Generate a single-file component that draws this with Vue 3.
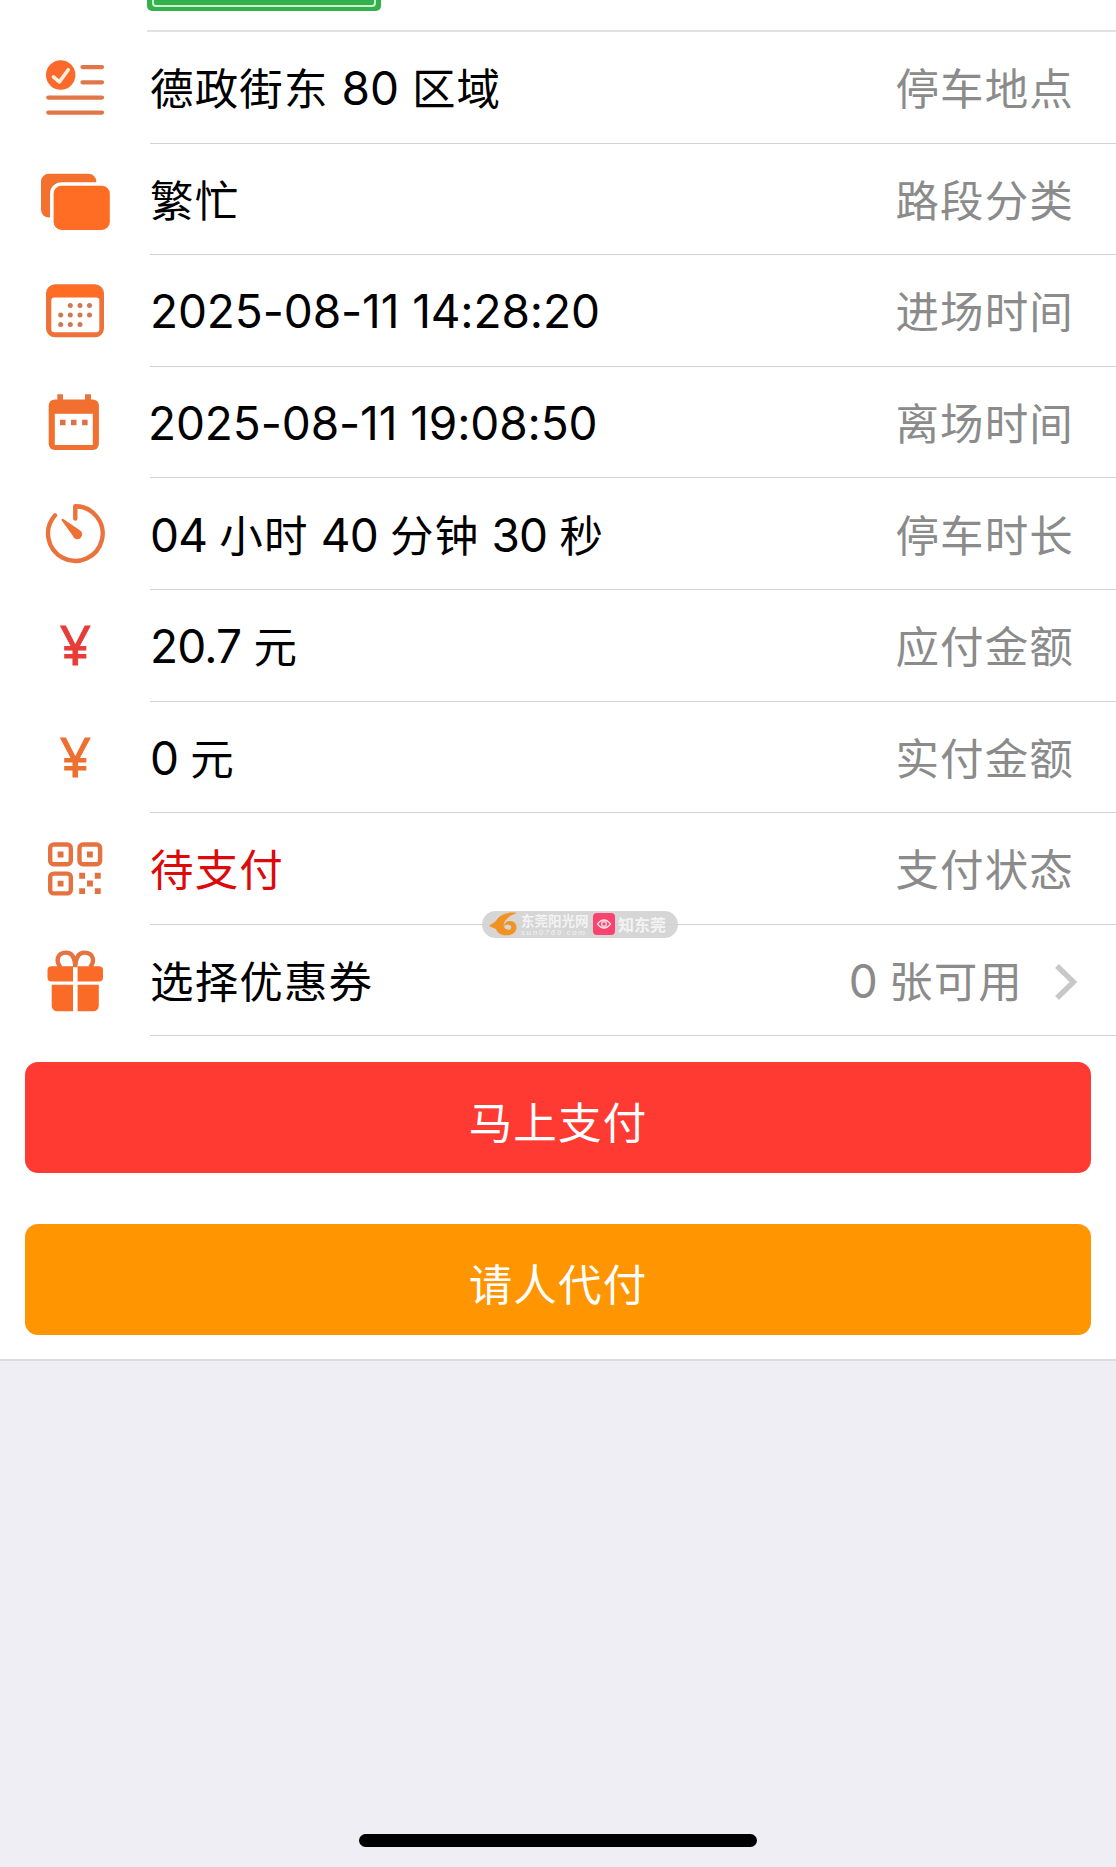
<template>
  <div class="parking-page">
    <div class="panel">
      <div class="plate-row">
        <div class="plate"><div class="plate-inner"></div></div>
      </div>

      <div class="row" v-for="item in rows" :key="item.icon">
        <svg class="icon" viewBox="0 0.7 150 111.6">
          <g v-if="item.icon === 'place'">
            <circle cx="60.7" cy="43.7" r="14.7" fill="#fb6a2b" />
            <path d="M53.4 45.5L59.4 50.6L68.3 38.5" fill="none" stroke="#ffeedd" stroke-width="3.6" stroke-linecap="round" stroke-linejoin="round" />
            <path d="M82.5 35.8H102M82.5 51H102M48.3 66.3H102M48.3 81.3H102" stroke="#e17647" stroke-width="4.3" stroke-linecap="round" />
          </g>
          <g v-else-if="item.icon === 'type'">
            <rect x="41" y="30.4" width="55.3" height="43.8" rx="8" fill="#f4702f" />
            <rect x="51.5" y="40.4" width="60" height="48.5" rx="10" fill="#fff" stroke="#fff" stroke-width="3" />
            <rect x="53.6" y="42.4" width="56.2" height="44.2" rx="8" fill="#ff6d24" />
          </g>
          <g v-else-if="item.icon === 'enter'">
            <rect x="46" y="30" width="58" height="53" rx="9" fill="#ee7138" />
            <path d="M48 43V39a8 8 0 0 1 8-8H94a8 8 0 0 1 8 8V43Z" fill="#ff6d24" />
            <rect x="51.3" y="43.2" width="48" height="34.8" rx="3" fill="#fff" />
            <circle v-for="(d, i) in dots" :key="i" :cx="d[0]" :cy="d[1]" r="2.5" fill="#d07850" />
          </g>
          <g v-else-if="item.icon === 'leave'">
            <path d="M57.3 28H63V36H57.3ZM85 28H91V36H85Z" fill="#e17647" />
            <rect x="48.7" y="33.2" width="50.2" height="50.4" rx="6" fill="#f2702f" />
            <rect x="54.8" y="47.5" width="38" height="31.2" fill="#fff" />
            <path d="M60 53.5h5.5v5.5h-5.5zM71 53.5h5.5v5.5h-5.5zM82.1 53.5h5.5v5.5h-5.5z" fill="#dc7046" />
          </g>
          <g v-else-if="item.icon === 'timer'">
            <path d="M75.3 41.2V29A27.3 27.3 0 1 1 55 38.1" fill="none" stroke="#ea733d" stroke-width="4.4" stroke-linecap="round" stroke-linejoin="round" />
            <path d="M61.7 43.2C60.8 42.2 62.2 41 63.3 41.8L79.5 52.7A4.8 4.8 0 1 1 72.8 58.4Z" fill="#ee7035" />
          </g>
          <text v-else-if="item.icon === 'due'" class="yen due" x="75.4" y="76" text-anchor="middle">¥</text>
          <text v-else-if="item.icon === 'paid'" class="yen" x="75.4" y="76" text-anchor="middle">¥</text>
          <g v-else-if="item.icon === 'status'" fill="#e17140">
            <g fill="none" stroke="#e6733f" stroke-width="4.4">
              <rect x="50.2" y="32.2" width="20.6" height="19.8" rx="3.5" />
              <rect x="79.5" y="32.2" width="20.6" height="19.8" rx="3.5" />
              <rect x="50.2" y="61.3" width="20.6" height="19.8" rx="3.5" />
            </g>
            <path d="M57.7 39.3h5.8v5.8h-5.8zM87 39.3h5.8v5.8h-5.8zM57.7 68.4h5.8v5.8h-5.8z" />
            <path d="M79.2 60.5h5.9v5.9h-5.9zM94.8 60.5h5.9v5.9h-5.9zM87 68.2h5.9v5.9h-5.9zM79.2 75.9h5.9v5.9h-5.9zM94.8 75.9h5.9v5.9h-5.9z" />
          </g>
          <g v-else fill="#fa6b28">
            <path d="M75.3 43C75 33 71.5 28.3 66 28.3C57 28.3 55.5 37 60.5 42.8M75.3 43C75.6 33 79.1 28.3 84.6 28.3C93.6 28.3 95.1 37 90.1 42.8" fill="none" stroke="#e6733f" stroke-width="4.4" />
            <path d="M51.5 41.9H73V57.2H51.5a4 4 0 0 1-4-4V45.9a4 4 0 0 1 4-4ZM77.6 41.9H99a4 4 0 0 1 4 4V53.2a4 4 0 0 1-4 4H77.6Z" />
            <path d="M51.7 60.4H73V87H57.2a5.5 5.5 0 0 1-5.5-5.5ZM77.6 60.4H98.8V81.5a5.5 5.5 0 0 1-5.5 5.5H77.6Z" />
          </g>
        </svg>
        <div class="content">
          <div class="value" :class="item.cls">
            <span v-for="(p, i) in split(item.value)" :key="i" :class="{ num: p.num }">{{ p.text }}</span>
          </div>
          <div class="label" :class="{ tight: item.arrow }">
            <span v-for="(p, i) in split(item.label)" :key="i" :class="{ num: p.num }">{{ p.text }}</span>
          </div>
          <svg v-if="item.arrow" class="arrow" viewBox="0 0 22 36"><path d="M2 2L18.5 18L2 34" fill="none" stroke="#c8c8c9" stroke-width="5.4" /></svg>
        </div>
        <div v-if="item.icon === 'status'" class="watermark">
          <svg class="wm-sun" viewBox="0 0 28 24">
            <path d="M28 1C17-1 9 4 7 9L0 14L7 17C9 24 20 25 25 21C30 16 27 9 21 9C17 9 15 12 15 15C17 12 20 12 22 14C23 17 20 19 17 17C12 14 15 5 28 1Z" fill="#f29222" />
          </svg>
          <div class="wm-name"><b>东莞阳光网</b><i>sun0769.com</i></div>
          <svg class="wm-eye" viewBox="0 0 22 22">
            <rect width="22" height="22" rx="4" fill="#fa4470" />
            <path d="M4.5 11Q11 3 17.5 11Q11 19 4.5 11Z" fill="none" stroke="#ffe4ea" stroke-width="1.3" />
            <circle cx="11" cy="11" r="2.3" fill="none" stroke="#ffe4ea" stroke-width="1.3" />
          </svg>
          <b class="wm-know">知东莞</b>
        </div>
      </div>

      <div class="actions">
        <button class="btn pay">马上支付</button>
        <button class="btn proxy">请人代付</button>
      </div>
    </div>

    <div class="home-bar"></div>
  </div>
</template>

<script setup>
const rows = [
  { icon: 'place', value: '德政街东 80 区域', label: '停车地点' },
  { icon: 'type', value: '繁忙', label: '路段分类' },
  { icon: 'enter', value: '2025-08-11 14:28:20', label: '进场时间', cls: 'date' },
  { icon: 'leave', value: '2025-08-11 19:08:50', label: '离场时间', cls: 'date shift' },
  { icon: 'timer', value: '04 小时 40 分钟 30 秒', label: '停车时长', cls: 'tight' },
  { icon: 'due', value: '20.7 元', label: '应付金额', cls: 'tight' },
  { icon: 'paid', value: '0 元', label: '实付金额', cls: 'tight' },
  { icon: 'status', value: '待支付', label: '支付状态', cls: 'unpaid' },
  { icon: 'coupon', value: '选择优惠券', label: '0 张可用', arrow: true }
]

const dots = [
  [70.3, 51.3], [80, 51.3], [89.5, 51.3],
  [60.7, 60.8], [70.3, 60.8], [80, 60.8], [89.5, 60.8],
  [60.7, 70.1], [70.3, 70.1], [80, 70.1]
]

// digits and Chinese characters are set at slightly different sizes
const split = (s) =>
  s.match(/[\d\-:. ]+|[^\d\-:. ]+/g).map((text) => ({ text, num: /[\d ]/.test(text) }))
</script>

<style>
body{background:#efeef4}
</style>

<style scoped>
.parking-page{height:1867px;display:flex;flex-direction:column;background:#efeef4;font-family:"Noto Sans CJK SC",sans-serif;overflow:hidden}
.panel{background:#fff;border-bottom:2px solid #dcdce0;height:1359px;box-sizing:content-box}
.plate-row{height:32px;box-sizing:border-box;margin-left:147px;border-bottom:2px solid #e2e2e2}
.plate{width:234px;height:11px;box-sizing:border-box;background:#34b04c;border-radius:0 0 5px 5px;padding:0 5px 4px}
.plate-inner{height:7px;box-sizing:border-box;border:2px solid #c9f5d0;border-top:none;border-radius:0 0 4px 4px}
.row{position:relative;display:flex;height:111.6px}
.icon{width:150px;height:111.6px;flex:none}
.content{flex:1;display:flex;align-items:center;border-bottom:1.5px solid #d2d2d4;box-sizing:border-box;padding-right:42px}
.value,.label{font-size:43.5px;letter-spacing:1.15px;line-height:60px;height:60px;white-space:pre}
.value{flex:1;color:#000}
.label{color:#8b8b8b}
.num{font-family:Inter,sans-serif;font-size:46px;letter-spacing:0}
.date .num{letter-spacing:-.1px}
.tight .num{letter-spacing:-.8px}
.shift{margin-left:-2px}
.unpaid{color:#dc0a0a}
.yen{font-family:"Noto Sans",sans-serif;font-size:54.6px;fill:#ee7030;stroke:#ee7030;stroke-width:.9px}
.due{fill:#e83c38;stroke:#e83c38}
.arrow{width:22px;height:36px;margin:3px -3px 0 32px}

.watermark{position:absolute;left:482px;bottom:-13px;width:196px;height:27px;box-sizing:border-box;padding:0 8px 0 7px;border-radius:14px;background:rgba(208,208,208,.88);display:flex;align-items:center;color:#f3f3f3;z-index:1}
.wm-sun{width:28px;height:24px;flex:none}
.wm-name{width:70px;margin-left:4px;display:flex;flex-direction:column;white-space:nowrap}
.wm-name b{font-size:13.5px;line-height:17px;font-weight:700}
.wm-name i{font-family:"Liberation Sans",sans-serif;font-size:8px;line-height:8px;letter-spacing:1.6px}
.wm-eye{width:22px;height:22px;flex:none;margin-left:2px}
.wm-know{font-size:16px;line-height:20px;margin-left:3px;white-space:nowrap}

.actions{padding:25.3px 25px 0;display:flex;flex-direction:column;gap:51px}
.btn{height:111.4px;border:none;border-radius:13px;color:#fff;font-family:inherit;font-size:43.5px;letter-spacing:1.15px;line-height:60px;padding:7px 0 0}
.pay{background:#ff3a32}
.proxy{background:#ff9500}
.home-bar{width:398px;height:13px;border-radius:7px;background:#000;margin:auto auto 20px}
</style>
